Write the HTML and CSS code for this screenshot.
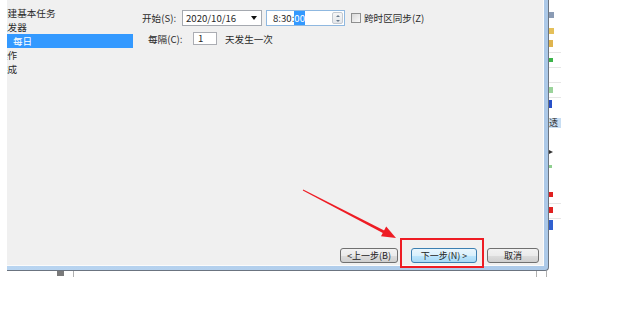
FILE: index.html
```html
<!DOCTYPE html>
<html lang="zh-CN">
<head>
<meta charset="utf-8">
<title>创建基本任务向导 - 每日</title>
<link rel="stylesheet" href="styles.css">
</head>
<body>
<div class="screen">
  <div class="top">
    <div class="window">
      <div class="client">
        <div class="main">
          <ul class="nav">
            <li>创建基本任务</li>
            <li>触发器</li>
            <li class="sub selected">每日</li>
            <li>操作</li>
            <li>完成</li>
          </ul>
          <div class="content">
            <div class="row row-start">
              <span class="label label-start">开始(S):</span>
              <div class="combo"><span>2020/10/16</span><i class="caret"></i></div>
              <div class="timebox"><span>8:30:<span class="sel">00</span></span><div class="spin"><i class="up"></i><i class="down"></i></div></div>
              <span class="check"></span>
              <span class="label">跨时区同步(Z)</span>
            </div>
            <div class="row row-every">
              <span class="label label-every">每隔(C):</span>
              <div class="num">1</div>
              <span class="label unit">天发生一次</span>
            </div>
          </div>
        </div>
        <div class="footer">
          <button class="btn btn-back">&lt;上一步(B)</button>
          <button class="btn btn-next">下一步(N) &gt;</button>
          <button class="btn btn-cancel">取消</button>
        </div>
      </div>
    </div>
    <div class="side">
      <i class="s s1"></i>
      <i class="s s2"></i>
      <i class="s s3"></i>
      <i class="s ln l1"></i>
      <i class="s s4"></i>
      <i class="s ln l2"></i>
      <i class="s ln l3"></i>
      <i class="s s5"></i>
      <i class="s ln l4"></i>
      <i class="s s6"></i>
      <span class="s tou">透</span>
      <i class="s s7"></i>
      <i class="s s8"></i>
      <i class="s s9"></i>
      <i class="s ln l5"></i>
      <i class="s s10"></i>
      <i class="s ln l6"></i>
      <i class="s s11"></i>
    </div>
  </div>
  <div class="under">
    <i class="tb"></i>
    <i class="tick t1"></i>
    <i class="tick t2"></i>
    <i class="tick t3"></i>
  </div>
  <div class="highlight"></div>
  <svg class="arrow" width="620" height="309" viewBox="0 0 620 309">
    <polygon points="303.2,189.6 384.7,230.7 383.3,233.3 302.8,190.4" fill="#ee1c24"/>
    <polygon points="396,238 381,236.2 386.2,226.6" fill="#ee1c24"/>
  </svg>
</div>
</body>
</html>
```
FILE: styles.css
```css
html, body {
  margin: 0;
  padding: 0;
  background: #ffffff;
}

body {
  width: 620px;
  height: 309px;
  overflow: hidden;
  font-family: "Noto Sans CJK SC", "Noto Sans", "Liberation Sans", sans-serif;
  font-size: 9.6px;
  color: #2a2a2a;
}

.screen {
  position: relative;
  width: 620px;
  height: 309px;
}

.top {
  display: flex;
  align-items: flex-start;
  padding-left: 7px;
}

.window {
  background: linear-gradient(90deg, #b9d5f1, #acc9e8);
  padding: 0 4px 4px 0;
  border-right: 1px solid #6b7480;
  border-bottom: 1px solid #6b7480;
  border-bottom-right-radius: 4px;
}

.client {
  width: 536px;
  height: 265px;
  background: #f0f0f0;
  border-right: 1px solid #fbfbfb;
  border-bottom: 1px solid #fbfbfb;
  display: flex;
  flex-direction: column;
}

.main {
  flex: 1;
  display: flex;
}

.nav {
  list-style: none;
  margin: 0;
  padding: 6px 0 0;
  width: 126px;
  overflow: hidden;
}

.nav li {
  height: 14px;
  line-height: 14px;
  text-indent: -9px;
  white-space: nowrap;
}

.nav li.sub {
  text-indent: 6px;
}

.nav li.selected {
  background: #3399ff;
  color: #ffffff;
}

.content {
  margin-left: 9px;
  padding-top: 10px;
  display: flex;
  flex-direction: column;
  gap: 6px;
}

.row {
  display: flex;
  align-items: center;
  white-space: nowrap;
}

.row-start {
  height: 16px;
}

.label-start {
  width: 40px;
}

.combo {
  width: 80px;
  height: 16px;
  box-sizing: border-box;
  border: 1px solid #a5a9b0;
  background: #ffffff;
  display: flex;
  align-items: center;
  justify-content: space-between;
  padding: 0 4px 0 3px;
}

.caret {
  width: 0;
  height: 0;
  border-left: 3.5px solid transparent;
  border-right: 3.5px solid transparent;
  border-top: 4px solid #111111;
}

.timebox {
  margin-left: 4px;
  width: 79px;
  height: 16px;
  box-sizing: border-box;
  border: 1px solid #8fb8e0;
  background: #ffffff;
  display: flex;
  align-items: center;
  justify-content: space-between;
  padding: 0 1px 0 6px;
}

.sel {
  background: #3399ff;
  color: #ffffff;
}

.spin {
  width: 11px;
  height: 12px;
  box-sizing: border-box;
  border: 1px solid #c3c9d0;
  border-radius: 2px;
  background: linear-gradient(#f6f6f6, #e3e6ea);
  display: flex;
  flex-direction: column;
  align-items: center;
  justify-content: space-around;
}

.spin .up {
  width: 0;
  height: 0;
  border-left: 2px solid transparent;
  border-right: 2px solid transparent;
  border-bottom: 2px solid #6a7a8c;
}

.spin .down {
  width: 0;
  height: 0;
  border-left: 2px solid transparent;
  border-right: 2px solid transparent;
  border-top: 2px solid #6a7a8c;
}

.check {
  margin: 0 3px 0 6px;
  width: 8px;
  height: 8px;
  border: 1px solid #8e8f8f;
  background: linear-gradient(135deg, #d8d8d8, #fafafa);
}

.row-every {
  height: 13px;
  padding-left: 6px;
}

.label-every {
  width: 45px;
}

.num {
  width: 24px;
  height: 13px;
  box-sizing: border-box;
  border: 1px solid #abadb3;
  background: #ffffff;
  padding-left: 4px;
  line-height: 11px;
}

.unit {
  margin-left: 8px;
}

.footer {
  display: flex;
  justify-content: flex-end;
  align-items: flex-end;
  padding: 0 4px 2px 0;
}

.btn {
  height: 15px;
  box-sizing: border-box;
  padding: 0;
  font-family: inherit;
  font-size: 9px;
  line-height: 13px;
  color: #222222;
  border: 1px solid #707070;
  border-radius: 3px;
  background: linear-gradient(#f2f2f2 0%, #ebebeb 50%, #dddddd 51%, #cfcfcf 100%);
}

.btn-back {
  width: 58px;
}

.btn-next {
  width: 66px;
  margin-left: 13px;
  border-color: #3c7fb1;
  background: linear-gradient(#eaf6fd 0%, #d9f0fc 50%, #bee6fd 51%, #a7d9f5 100%);
}

.btn-cancel {
  width: 52px;
  margin-left: 10px;
}

.side {
  display: flex;
  flex-direction: column;
  width: 13px;
}

.s {
  display: block;
}

.s1 { margin-top: 12px; width: 5px; height: 6px; background: #8a9bb4; }
.s2 { margin-top: 10px; width: 5px; height: 6px; background: #e5c05a; }
.s3 { margin-top: 6px; width: 4px; height: 7px; background: #dfb44e; }
.ln { height: 1px; width: 12px; background: #e6e6e6; }
.l1 { margin-top: 5px; }
.s4 { margin-top: 5px; width: 4px; height: 4px; background: #3cb44a; }
.l2 { margin-top: 5px; }
.l3 { margin-top: 14px; }
.s5 { margin-top: 4px; width: 4px; height: 6px; background: #9bd39b; }
.l4 { margin-top: 4px; }
.s6 { margin-top: 2px; width: 3px; height: 8px; background: #2850c8; }
.tou {
  margin-top: 10px;
  width: 12px;
  height: 10px;
  background: #c8def3;
  font-size: 9px;
  line-height: 10px;
  color: #333333;
  overflow: hidden;
}
.s7 {
  margin-top: 22px;
  width: 0;
  height: 0;
  border-top: 2px solid transparent;
  border-bottom: 2px solid transparent;
  border-left: 4px solid #333333;
}
.s8 { margin-top: 11px; width: 3px; height: 3px; background: #8fd08f; }
.s9 { margin-top: 24px; width: 4px; height: 5px; background: #e02020; }
.l5 { margin-top: 6px; }
.s10 { margin-top: 3px; width: 4px; height: 6px; background: #e02020; }
.l6 { margin-top: 5px; }
.s11 { margin-top: 1px; width: 4px; height: 10px; background: #3060d0; }

.under {
  display: flex;
  align-items: flex-start;
  padding-left: 57px;
}

.tb {
  display: block;
  width: 7px;
  height: 5px;
  background: #7a7a7a;
}

.tick {
  display: block;
  width: 1px;
  height: 6px;
  background: #b0b0b0;
}

.t1 { margin-left: 9px; }
.t2 { margin-left: 462px; }
.t3 { margin-left: 9px; }

.highlight {
  position: absolute;
  left: 400px;
  top: 238px;
  width: 80px;
  height: 26px;
  border: 2px solid #ee1c24;
}

.arrow {
  position: absolute;
  left: 0;
  top: 0;
  pointer-events: none;
}
```
